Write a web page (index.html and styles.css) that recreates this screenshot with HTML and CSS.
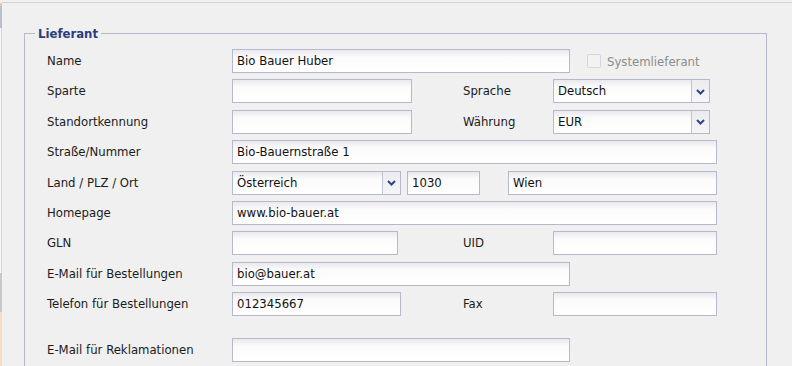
FILE: index.html
```html
<!DOCTYPE html>
<html lang="de">
<head>
<meta charset="utf-8">
<title>Lieferant</title>
<link rel="stylesheet" href="styles.css">
</head>
<body>
<div class="window">
  <div class="edge">
    <div class="edge-a"></div>
    <div class="edge-b"></div>
    <div class="edge-c"></div>
    <div class="edge-d"></div>
    <div class="edge-e"></div>
  </div>
  <main class="panel">
    <fieldset class="group">
      <legend class="group-title">Lieferant</legend>
      <div class="form">
        <div class="row">
          <span class="label">Name</span>
          <div class="wide">
            <div class="input w-name">Bio Bauer Huber</div>
            <label class="check">
              <span class="check-box"></span>
              <span class="check-text">Systemlieferant</span>
            </label>
          </div>
        </div>
        <div class="row">
          <span class="label">Sparte</span>
          <div class="input w-short"></div>
          <span class="label2">Sprache</span>
          <div class="select w-sel">
            <span class="select-text">Deutsch</span>
            <span class="select-btn"><svg width="9" height="6" viewBox="0 0 9 6"><path d="M1 1 L4.5 4.5 L8 1" fill="none" stroke="#2b4785" stroke-width="2"/></svg></span>
          </div>
        </div>
        <div class="row">
          <span class="label">Standortkennung</span>
          <div class="input w-short"></div>
          <span class="label2">Währung</span>
          <div class="select w-sel">
            <span class="select-text">EUR</span>
            <span class="select-btn"><svg width="9" height="6" viewBox="0 0 9 6"><path d="M1 1 L4.5 4.5 L8 1" fill="none" stroke="#2b4785" stroke-width="2"/></svg></span>
          </div>
        </div>
        <div class="row">
          <span class="label">Straße/Nummer</span>
          <div class="wide">
            <div class="input w-full">Bio-Bauernstraße 1</div>
          </div>
        </div>
        <div class="row">
          <span class="label">Land / PLZ / Ort</span>
          <div class="wide">
            <div class="select w-land">
              <span class="select-text">Österreich</span>
              <span class="select-btn"><svg width="9" height="6" viewBox="0 0 9 6"><path d="M1 1 L4.5 4.5 L8 1" fill="none" stroke="#2b4785" stroke-width="2"/></svg></span>
            </div>
            <div class="input w-plz">1030</div>
            <div class="input w-ort">Wien</div>
          </div>
        </div>
        <div class="row">
          <span class="label">Homepage</span>
          <div class="wide">
            <div class="input w-full">www.bio-bauer.at</div>
          </div>
        </div>
        <div class="row">
          <span class="label">GLN</span>
          <div class="input w-gln"></div>
          <span class="label2">UID</span>
          <div class="input w-right"></div>
        </div>
        <div class="row">
          <span class="label">E-Mail für Bestellungen</span>
          <div class="wide">
            <div class="input w-name">bio@bauer.at</div>
          </div>
        </div>
        <div class="row">
          <span class="label">Telefon für Bestellungen</span>
          <div class="input w-tel">012345667</div>
          <span class="label2">Fax</span>
          <div class="input w-right"></div>
        </div>
        <div class="spacer"></div>
        <div class="row">
          <span class="label">E-Mail für Reklamationen</span>
          <div class="wide">
            <div class="input w-name"></div>
          </div>
        </div>
      </div>
    </fieldset>
  </main>
</div>
</body>
</html>
```

FILE: styles.css
```css
* { box-sizing: border-box; }

html, body {
  margin: 0;
  padding: 0;
  background: #f0f0f0;
  height: 100%;
  overflow: hidden;
}

body {
  font-family: "DejaVu Sans Condensed", "DejaVu Sans", sans-serif;
  font-size: 13px;
  color: #1b1b1b;
}

.window {
  display: flex;
  height: 366px;
}

.edge {
  width: 2px;
  display: flex;
  flex-direction: column;
  flex: none;
}
.edge-a { height: 3px; background: #f0f0f0; }
.edge-b { height: 3px; background: #f3c88e; }
.edge-c { height: 22px; background: #b9bdd0; }
.edge-d { height: 245px; background: #f6f6f6; border-right: 1px solid #d8d8d8; }
.edge-e { height: 39px; background: #c9c9c9; }
.edge::after { content: ""; flex: 1; background: #f9dcbf; }

.panel {
  flex: 1;
  margin-top: 2px;
  border-top: 1px solid #d4d4d6;
  padding: 23px 25px 0 22px;
  display: flex;
  flex-direction: column;
  overflow: hidden;
}

.group {
  flex: 1;
  margin: 0;
  padding: 0 0 0 22px;
  border: 1px solid #b6b9cc;
  border-bottom: none;
  min-width: 0;
  min-height: 0;
}

.group-title {
  margin-left: -12px;
  padding: 0 3px;
  font-weight: bold;
  color: #2a3d7c;
  line-height: 15px;
}

.form {
  padding-top: 8px;
  display: grid;
  grid-template-columns: 185px 231px 90px 1fr;
  grid-template-rows: repeat(9, 24px) 8.8px 24px;
  row-gap: 6.4px;
  align-items: center;
}

.row { display: contents; }
.spacer { grid-column: 1 / -1; }

.label { grid-column: 1; margin-top: -1px; }
.label2 { grid-column: 3; margin-top: -1px; }
.wide {
  grid-column: 2 / -1;
  display: flex;
  align-items: center;
}

.input,
.select {
  height: 24px;
  border: 1px solid #b6b9cc;
  background: linear-gradient(#e9e9ee 0, #fbfbfc 7px, #ffffff 100%);
  line-height: 22px;
  padding: 0 4px;
  white-space: nowrap;
  color: #111;
}

.select {
  display: flex;
  padding: 0;
}
.select-text { flex: 1; padding-left: 4px; }
.select-btn {
  width: 18px;
  border-left: 1px solid #c0c3d2;
  background: linear-gradient(#ebebef, #f6f6f8);
  display: flex;
  align-items: center;
  justify-content: center;
}
.select-btn svg { display: block; margin-top: 1px; }

.w-name { width: 338px; }
.w-short { width: 180px; }
.w-sel { width: 157px; }
.w-full { width: 485px; }
.w-land { width: 169px; }
.w-plz { width: 73px; margin-left: 6px; }
.w-ort { width: 209px; margin-left: 28px; }
.w-gln { width: 166px; }
.w-right { width: 164px; }
.w-tel { width: 169px; }

.check {
  display: flex;
  align-items: center;
  margin-left: 17px;
  color: #8c8c8c;
}
.check-box {
  width: 14px;
  height: 14px;
  border: 1px solid #d6d7de;
  border-radius: 2px;
  background: #f2f2f3;
  margin-right: 6px;
}
```
